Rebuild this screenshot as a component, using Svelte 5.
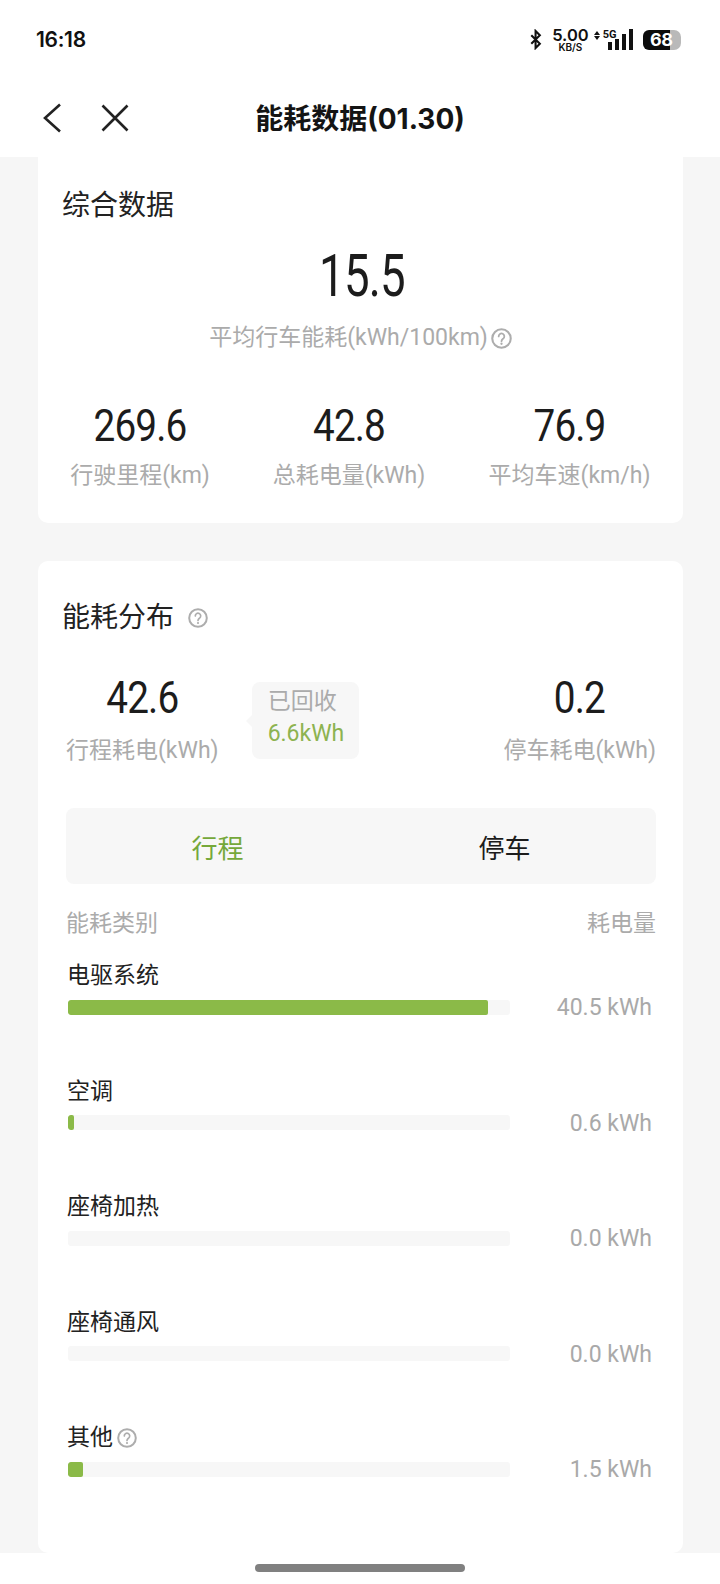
<script>
  const stats = [
    { value: '269.6', label: '行驶里程(km)' },
    { value: '42.8', label: '总耗电量(kWh)' },
    { value: '76.9', label: '平均车速(km/h)' }
  ];
  const rows = [
    { name: '电驱系统', pct: 95, value: '40.5 kWh' },
    { name: '空调', pct: 1.4, value: '0.6 kWh' },
    { name: '座椅加热', pct: 0, value: '0.0 kWh' },
    { name: '座椅通风', pct: 0, value: '0.0 kWh' },
    { name: '其他', pct: 3.4, value: '1.5 kWh', help: true }
  ];
  const bars = [8, 11, 16, 21];
</script>

{#snippet help(size)}
  <svg class="help" width={size} height={size} viewBox="0 0 20 20" fill="none" stroke="#adadad">
    <circle cx="10" cy="10" r="8.8" stroke-width="2" />
    <path d="M7.3 8a2.7 2.7 0 1 1 4.3 2.1c-1 .8-1.6 1.2-1.6 2.4" stroke-width="1.7" stroke-linecap="round" />
    <circle cx="10" cy="15" r="1.1" fill="#adadad" stroke="none" />
  </svg>
{/snippet}

<div class="page">
  <header class="top">
    <div class="status">
      <span class="time">16:18</span>
      <div class="indicators">
        <svg width="12" height="21" viewBox="0 0 14 24" fill="none" stroke="#111" stroke-width="2.4">
          <path d="M1.5 7l10 10-5 5V2l5 5-10 10" />
        </svg>
        <div class="speed"><b>5.00</b><small>KB/S</small></div>
        <div class="net">
          <span class="arrows"><i></i><i class="down"></i></span>
          <span class="five">5G</span>
        </div>
        <div class="signal">
          {#each bars as h}<i style="height:{h}px"></i>{/each}
        </div>
        <div class="battery"><span class="level">68</span><span class="rest"></span></div>
      </div>
    </div>
    <nav class="nav">
      <div class="nav-icons">
        <svg width="20" height="30" viewBox="0 0 20 30" fill="none" stroke="#222" stroke-width="2.6">
          <path d="M18 1.5L3 15l15 13.5" />
        </svg>
        <svg width="28" height="28" viewBox="0 0 28 28" fill="none" stroke="#222" stroke-width="2.6">
          <path d="M1.5 1.5l25 25M26.5 1.5l-25 25" />
        </svg>
      </div>
      <h1>能耗数据(01.30)</h1>
    </nav>
  </header>

  <main class="content">
    <section class="card overview">
      <h2>综合数据</h2>
      <div class="hero">
        <div class="big">15.5</div>
        <div class="muted hero-label">平均行车能耗(kWh/100km){@render help(21)}</div>
      </div>
      <div class="stats">
        {#each stats as s}
          <div class="stat">
            <div class="num">{s.value}</div>
            <div class="muted">{s.label}</div>
          </div>
        {/each}
      </div>
    </section>

    <section class="card dist">
      <h2 class="dist-title">能耗分布 {@render help(20)}</h2>
      <div class="split">
        <div class="stat">
          <div class="num">42.6</div>
          <div class="muted">行程耗电(kWh)</div>
        </div>
        <div class="tip">
          <span class="tip-a">已回收</span>
          <span class="tip-b">6.6kWh</span>
        </div>
        <div class="stat right">
          <div class="num">0.2</div>
          <div class="muted">停车耗电(kWh)</div>
        </div>
      </div>

      <div class="tabs">
        <div class="tab active">行程</div>
        <div class="tab second">停车</div>
      </div>

      <div class="thead muted">
        <span>能耗类别</span>
        <span>耗电量</span>
      </div>

      <div class="rows">
        {#each rows as r}
          <div class="row">
            <div class="row-name">{r.name}{#if r.help}{@render help(20)}{/if}</div>
            <div class="row-line">
              <div class="track"><div class="fill" style="width:{r.pct}%"></div></div>
              <div class="row-val">{r.value}</div>
            </div>
          </div>
        {/each}
      </div>
    </section>
  </main>

  <footer class="bottom"><div class="home"></div></footer>
</div>

<style>
  :global(body) {
    margin: 0;
    background: #f6f6f6;
  }
  .page {
    width: 720px;
    height: 1584px;
    display: flex;
    flex-direction: column;
    overflow: hidden;
    font-family: "Roboto", "Noto Sans CJK SC", sans-serif;
    color: #222;
    background: #f6f6f6;
  }
  .top {
    background: #fff;
    height: 157px;
    flex: none;
  }
  .status {
    height: 79px;
    padding: 0 39px 0 36px;
    display: flex;
    align-items: center;
    justify-content: space-between;
    box-sizing: border-box;
  }
  .time {
    font-family: "Inter", sans-serif;
    font-size: 21px;
    font-weight: 600;
    color: #111;
    letter-spacing: -0.3px;
  }
  .indicators {
    display: flex;
    align-items: center;
    color: #111;
  }
  .speed {
    display: flex;
    flex-direction: column;
    align-items: center;
    margin-left: 10px;
    font-family: "Inter", sans-serif;
  }
  .speed b { font-size: 16.5px; font-weight: 600; line-height: 14px; }
  .speed small { font-size: 10px; font-weight: 600; line-height: 10px; }
  .net {
    display: flex;
    align-items: flex-start;
    gap: 3px;
    margin-left: 5px;
    height: 24px;
  }
  .arrows {
    display: flex;
    flex-direction: column;
    gap: 1px;
    margin-top: 3px;
  }
  .arrows i {
    width: 0;
    height: 0;
    border-left: 3px solid transparent;
    border-right: 3px solid transparent;
    border-bottom: 4px solid #111;
  }
  .arrows i.down {
    border-bottom: 0;
    border-top: 4px solid #111;
  }
  .five {
    font-family: "Roboto", sans-serif;
    font-size: 11px;
    font-weight: 700;
    line-height: 14px;
  }
  .signal {
    display: flex;
    align-items: flex-end;
    gap: 2.5px;
    margin: 0 0 1px -9px;
    height: 21px;
  }
  .signal i {
    width: 4.5px;
    background: #111;
  }
  .battery {
    display: flex;
    margin-left: 10px;
    height: 20px;
  }
  .level {
    width: 20px;
    background: #0c0c0c;
    color: #fff;
    border-radius: 6px 0 0 6px;
    font-family: "Inter", sans-serif;
    font-size: 18px;
    font-weight: 700;
    line-height: 20px;
    padding-left: 7px;
    letter-spacing: -0.5px;
    white-space: nowrap;
    position: relative;
    z-index: 1;
  }
  .rest {
    width: 11px;
    background: #b9b9b9;
    border-radius: 0 7px 7px 0;
  }
  .nav {
    position: relative;
    height: 78px;
    display: flex;
    align-items: center;
    justify-content: center;
  }
  .nav-icons {
    position: absolute;
    left: 42px;
    top: 24px;
    display: flex;
    align-items: center;
    gap: 39px;
  }
  h1 {
    margin: 2px 0 0;
    font-family: "Inter", "Noto Sans CJK SC", sans-serif;
    font-size: 28px;
    line-height: 40px;
    font-weight: 700;
    color: #141414;
  }
  .content {
    flex: 1;
    padding: 0 37px 0 38px;
    display: flex;
    flex-direction: column;
    gap: 38px;
    min-height: 0;
  }
  .card {
    background: #fff;
    border-radius: 0 0 10px 10px;
  }
  .overview {
    height: 366px;
    padding: 29px 0 0;
    box-sizing: border-box;
  }
  .dist {
    flex: 1;
    border-radius: 10px;
    padding: 37px 0 0;
  }
  h2 {
    margin: 0 0 0 24px;
    font-size: 28px;
    line-height: 40px;
    font-weight: 400;
    color: #222;
  }
  .dist-title {
    display: flex;
    align-items: center;
    gap: 14px;
  }
  .hero {
    text-align: center;
    margin-top: 17px;
  }
  .big {
    font-size: 60px;
    line-height: 66px;
    letter-spacing: -1px;
    color: #1c1c1c;
    padding-left: 4px;
    transform: scaleX(0.76);
  }
  .muted {
    font-size: 23px;
    line-height: 34px;
    color: #ababab;
  }
  .hero-label {
    margin-top: 12px;
    display: flex;
    justify-content: center;
    align-items: center;
    gap: 3px;
  }
  .help {
    flex: none;
  }
  .stats {
    display: grid;
    grid-template-columns: 204px 214px 1fr;
    margin-top: 46px;
  }
  .stat {
    text-align: center;
    white-space: nowrap;
  }
  .num {
    font-size: 44px;
    line-height: 50px;
    letter-spacing: -1px;
    color: #1c1c1c;
    margin-bottom: 8px;
    transform: scaleX(0.88);
  }
  .split {
    display: flex;
    align-items: flex-start;
    padding: 0 27px 0 28px;
    margin-top: 35px;
  }
  .split .num {
    margin-bottom: 11px;
  }
  .split .right {
    margin-left: auto;
  }
  .tip {
    position: relative;
    margin-left: 33px;
    margin-top: 9px;
    width: 107px;
    height: 77px;
    box-sizing: border-box;
    padding: 4px 0 0 16px;
    background: #f7f7f7;
    border-radius: 8px;
    display: flex;
    flex-direction: column;
    font-size: 23px;
    line-height: 32px;
  }
  .tip::before {
    content: "";
    position: absolute;
    left: -6px;
    top: 33px;
    border-right: 6px solid #f7f7f7;
    border-top: 6px solid transparent;
    border-bottom: 6px solid transparent;
  }
  .tip-a { color: #ababab; }
  .tip-b { color: #8db350; }
  .tabs {
    margin: 40px 27px 0 28px;
    height: 76px;
    background: #f7f7f7;
    border-radius: 8px;
    display: grid;
    grid-template-columns: 1fr 1fr;
  }
  .tab {
    display: flex;
    align-items: center;
    justify-content: center;
    font-size: 26px;
    color: #1c1c1c;
  }
  .tab.active {
    color: #75a83a;
    padding-left: 8px;
  }
  .tab.second {
    padding-right: 8px;
  }
  .thead {
    display: flex;
    justify-content: space-between;
    margin: 23px 27px 0 28px;
  }
  .rows {
    margin: 19px 31px 0 30px;
  }
  .row {
    height: 115.5px;
  }
  .row-name {
    display: flex;
    align-items: center;
    gap: 4px;
    font-size: 23px;
    line-height: 32px;
    color: #222;
    margin-left: -1px;
  }
  .row-line {
    display: flex;
    align-items: center;
    justify-content: space-between;
    margin-top: 2px;
  }
  .track {
    width: 442px;
    height: 15px;
    background: #f7f7f7;
    border-radius: 3px;
    overflow: hidden;
  }
  .fill {
    height: 100%;
    background: #8bba48;
    border-radius: 2px;
  }
  .row-val {
    font-size: 23px;
    line-height: 24px;
    color: #a9a9a9;
    margin-top: 2px;
  }
  .bottom {
    flex: none;
    height: 31px;
    background: #fff;
    display: flex;
    justify-content: center;
    padding-top: 11px;
    box-sizing: border-box;
  }
  .home {
    width: 210px;
    height: 8px;
    border-radius: 4px;
    background: #808080;
  }
</style>
